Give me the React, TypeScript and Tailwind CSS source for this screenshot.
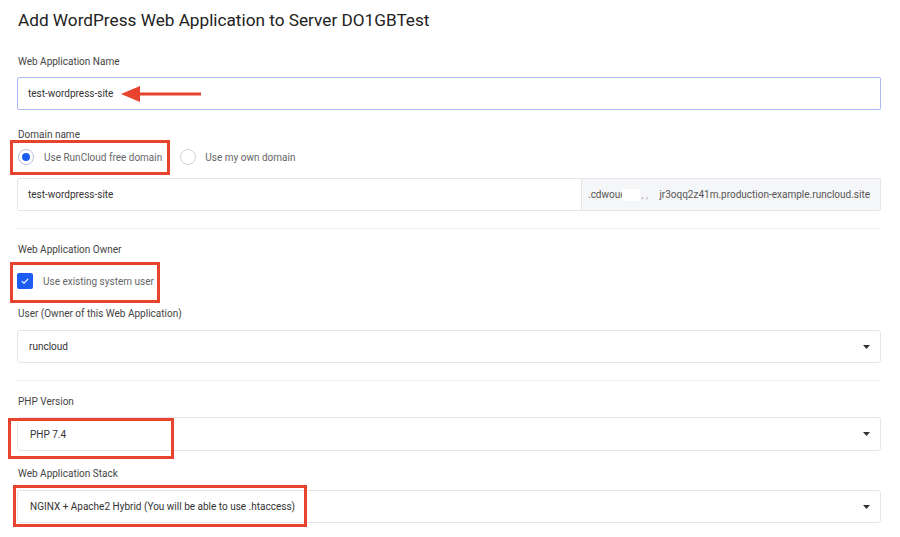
import React from "react";

const Caret = () => (
  <svg width="7" height="4" viewBox="0 0 7 4" className="shrink-0">
    <path d="M0 0 L7 0 L3.5 4 Z" fill="#333" />
  </svg>
);

function Select({ value, className = "" }: { value: string; className?: string }) {
  return (
    <div
      className={`flex items-center justify-between h-[33px] border border-[#e3e5ea] rounded-[3px] pl-[11px] pr-[10px] text-[10px] text-[#333] bg-white ${className}`}
    >
      <span>{value}</span>
      <Caret />
    </div>
  );
}

function Label({ children, className = "" }: { children: React.ReactNode; className?: string }) {
  return <div className={`h-[16px] leading-[16px] text-[10px] text-[#444] ${className}`}>{children}</div>;
}

export default function App() {
  return (
    <div className="relative w-[900px] h-[537px] overflow-hidden bg-white pl-[17px] pr-[19px] font-['Roboto','Liberation_Sans',sans-serif]">
      <h1 className="h-[41px] flex items-center pl-[1px] text-[17.2px] text-[#222] font-normal">
        Add WordPress Web Application to Server DO1GBTest
      </h1>

      <Label className="mt-[13px] pl-[1px]">Web Application Name</Label>
      <div className="mt-[7px] h-[33px] flex items-center border border-[#a9b8f6] rounded-[2px] pl-[10px] text-[10px] text-[#333]">
        test-wordpress-site
      </div>

      <Label className="mt-[17px] pl-[1px]">Domain name</Label>
      <div className="mt-[3px] h-[22px] flex items-center text-[10px] text-[#666]">
        <span className="w-[16px] h-[16px] rounded-full border border-[#b9c3dc] flex items-center justify-center ml-[1px]">
          <span className="w-[8px] h-[8px] rounded-full bg-[#1c5cf2]" />
        </span>
        <span className="ml-[10px]">Use RunCloud free domain</span>
        <span className="ml-[18px] w-[16px] h-[16px] rounded-full border border-[#cfd3dc]" />
        <span className="ml-[9px]">Use my own domain</span>
      </div>

      <div className="mt-[10px] h-[33px] flex text-[10px]">
        <div className="flex-1 flex items-center border border-[#e3e5ea] rounded-l-[2px] pl-[10px] text-[#333]">
          test-wordpress-site
        </div>
        <div className="w-[299px] flex items-center border border-l-0 border-[#e3e5ea] bg-[#f5f6f8] rounded-r-[2px] pl-[6px] pr-[10px] text-[#555]">
          <span>.cdwouc</span>
          <span className="flex-1 flex items-center">
            <span className="inline-block w-[18px] h-[12px] bg-white ml-[-3px]" />
            <span className="text-[#aaa] ml-[1px]">, ,</span>
          </span>
          <span>jr3oqq2z41m.production-example.runcloud.site</span>
        </div>
      </div>

      <div className="mt-[17px] border-t border-[#eeeff2]" />

      <Label className="mt-[13px] pl-[1px]">Web Application Owner</Label>
      <div className="mt-[12px] h-[22px] flex items-center text-[10px] text-[#666]">
        <span className="w-[16px] h-[16px] rounded-[2px] bg-[#1d5df4] flex items-center justify-center">
          <svg width="10" height="8" viewBox="0 0 10 8">
            <path d="M1.8 4.2 L4 6.2 L8.2 1.8" stroke="white" strokeWidth="1.1" fill="none" />
          </svg>
        </span>
        <span className="ml-[10px]">Use existing system user</span>
      </div>

      <Label className="mt-[14px] pl-[1px]">User (Owner of this Web Application)</Label>
      <Select className="mt-[8px]" value="runcloud" />

      <div className="mt-[17px] border-t border-[#eeeff2]" />

      <Label className="mt-[13px] pl-[1px]">PHP Version</Label>
      <Select className="mt-[7px] h-[34px] pl-[12px]" value="PHP 7.4" />

      <Label className="mt-[15px] pl-[1px]">Web Application Stack</Label>
      <Select className="mt-[8px] pl-[12px]" value="NGINX + Apache2 Hybrid (You will be able to use .htaccess)" />

      {/* annotations */}
      <div className="absolute left-[10px] top-[140px] w-[160px] h-[35px] border-[3px] border-[#e8432d]" />
      <div className="absolute left-[10px] top-[262px] w-[150px] h-[41px] border-[3px] border-[#e8432d]" />
      <div className="absolute left-[8px] top-[418px] w-[166px] h-[41px] border-[3px] border-[#e8432d]" />
      <div className="absolute left-[13px] top-[485px] w-[294px] h-[42px] border-[3px] border-[#e8432d]" />
      <svg className="absolute left-[120px] top-[84px]" width="82" height="20" viewBox="0 0 82 20">
        <path d="M1 10 L20 2 L20 18 Z" fill="#e8432d" />
        <rect x="18" y="8.5" width="63" height="3" fill="#e8432d" />
      </svg>
    </div>
  );
}
